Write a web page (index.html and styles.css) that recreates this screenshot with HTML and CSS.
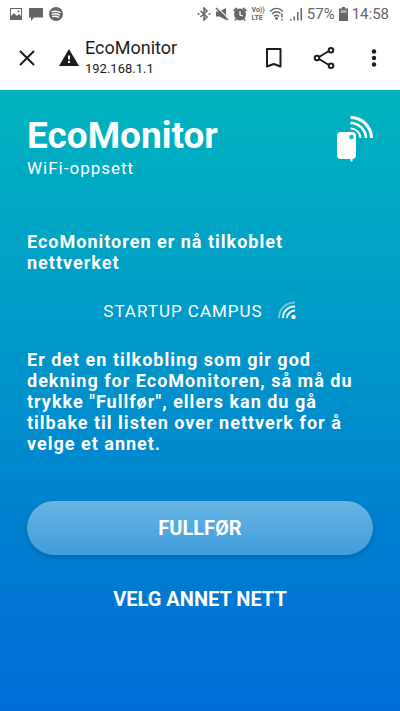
FILE: index.html
```html
<!DOCTYPE html>
<html lang="nb">
<head>
<meta charset="utf-8">
<meta name="viewport" content="width=device-width, initial-scale=1">
<title>EcoMonitor</title>
<link rel="stylesheet" href="styles.css">
</head>
<body>
<div class="status">
  <div class="status-group">
    <svg width="14" height="14" viewBox="0 0 14 14"><path fill="currentColor" fill-rule="evenodd" d="M1 1h12v12H1zM2 2v10h10V2z"/><path fill="currentColor" d="M2 12V9l3-3 3 3 2-2 2 2v3z"/><circle cx="9.500" cy="4.500" r="1" fill="currentColor"/></svg>
    <svg width="14" height="14" viewBox="0 0 14 14"><path fill="currentColor" d="M0 1h14v9.500H5L2 14v-3.500H0z"/></svg>
    <svg width="14" height="14" viewBox="0 0 14 14"><circle cx="7" cy="7" r="7" fill="currentColor"/><path fill="none" stroke="#fff" stroke-linecap="round" stroke-width="1.400" d="M3 4.700c2.800-.8 5.700-.5 8.200.8M3.400 7.200c2.400-.7 4.900-.4 7 .8M3.800 9.500c2-.5 4-.3 5.800.7"/></svg>
  </div>
  <div class="status-group status-right">
    <svg width="14" height="14" viewBox="0 0 14 14"><path fill="none" stroke="currentColor" stroke-width="1.500" d="M3.500 4l6.500 6-3 3V1l3 3-6.500 6"/><circle cx="1.500" cy="7" r="1" fill="currentColor"/><circle cx="12.500" cy="7" r="1" fill="currentColor"/></svg>
    <svg width="14" height="14" viewBox="0 0 14 14"><path fill="currentColor" d="M1 4.500h3.500L11 1v12L4.500 9.500H1z"/><path stroke="#fff" stroke-width="1.200" d="M2 .2l12 12"/><path stroke="currentColor" stroke-width="1.500" d="M1 1l12 12"/></svg>
    <svg width="14" height="14" viewBox="0 0 14 14"><circle cx="7" cy="7.500" r="5.900" fill="currentColor"/><path fill="none" stroke="currentColor" stroke-width="1.700" d="M.7 4L4 1M10 1l3.300 3M3 12l-1 1.500M11 12l1 1.500"/><path fill="none" stroke="#fff" stroke-width="1.200" d="M7 4v4l3 1"/></svg>
    <span class="volte"><span>Vo))</span><span>LTE</span></span>
    <svg width="16" height="14" viewBox="0 0 16 14"><path fill="none" stroke="currentColor" stroke-width="1.400" d="M1 4.500c4-4 9-4 13 0M3 7c3-3 6-3 9 0M5 9.500c1.700-1.700 3.300-1.700 5 0"/><circle cx="7.500" cy="11.500" r="1.400" fill="currentColor"/><path stroke="#fff" stroke-width="3" d="M13 6v8"/><path stroke="currentColor" stroke-width="1.500" d="M13 6.500v4M13 12v1.500"/></svg>
    <svg width="14" height="14" viewBox="0 0 14 14"><path fill="currentColor" d="M1 12h1.500v1.500H1zM4.500 9.500H6v4H4.500zM8 5h1.500v8.500H8zM11.500 1H13v12.500h-1.500z"/></svg>
    <span class="status-text">57%</span>
    <svg width="9" height="14" viewBox="0 0 9 14"><path fill="currentColor" d="M3 0h3v1.500h3V14H0V1.500h3z"/><path fill="#aaa" d="M1.500 3h6v3h-6z"/></svg>
    <span class="status-text">14:58</span>
  </div>
</div>
<header class="bar">
  <button class="icon" aria-label="Lukk"><svg width="20" height="20" viewBox="0 0 20 20"><path stroke="currentColor" stroke-width="2" d="M3 3l14 14M17 3L3 17"/></svg></button>
  <svg class="warn" width="20" height="18" viewBox="0 0 20 18"><path fill="currentColor" d="M10 0l10 17H0z"/><path stroke="#fff" stroke-width="2" d="M10 6.500v4M10 12v2"/></svg>
  <div class="site"><div class="site-name">EcoMonitor</div><div class="site-host">192.168.1.1</div></div>
  <div class="actions">
    <button class="icon" aria-label="Bokmerke"><svg width="24" height="24" viewBox="0 0 24 24"><path fill="none" stroke="currentColor" stroke-width="2" stroke-linejoin="round" d="M5 3h13.500v17.500L11.800 18 5 20.500z"/></svg></button>
    <button class="icon" aria-label="Del"><svg width="24" height="24" viewBox="0 0 24 24"><path fill="none" stroke="currentColor" stroke-width="1.800" d="M7 11l10-6M7 13l10 6"/><g fill="#fff" stroke="currentColor" stroke-width="2"><circle cx="5" cy="12" r="2.300"/><circle cx="19" cy="4.300" r="2.300"/><circle cx="19" cy="19.700" r="2.300"/></g></svg></button>
    <button class="icon" aria-label="Meny"><svg width="24" height="24" viewBox="0 0 24 24"><g fill="currentColor"><circle cx="12" cy="5.500" r="2.200"/><circle cx="12" cy="12" r="2.200"/><circle cx="12" cy="18.500" r="2.200"/></g></svg></button>
  </div>
</header>
<main class="page">
  <div class="head">
    <div><h1>EcoMonitor</h1><p class="sub">WiFi-oppsett</p></div>
    <svg width="37" height="46" viewBox="0 0 37 46"><rect x="1" y="16" width="19" height="27" rx="4" fill="#fff"/><path fill="#fff" d="M14.500 42h2v3.500h-2z"/><circle cx="15.500" cy="21" r="2.300" fill="#19b9d4"/><g fill="none" stroke="#fff" stroke-width="2.600"><path d="M14.500 1.500A21 21 0 0 1 35.500 22" stroke-width="3.200"/><path d="M14.500 7A15.500 15.500 0 0 1 30 22"/><path d="M14.500 12.500A10 10 0 0 1 24.500 22" stroke-width="2"/></g></svg>
  </div>
  <p class="message">EcoMonitoren er nå tilkoblet nettverket</p>
  <div class="network"><span>STARTUP CAMPUS</span>
    <svg width="20" height="20" viewBox="0 0 20 20"><g fill="none" stroke="#fff" stroke-width="2"><path opacity=".45" d="M2 17C2 8 9 1.500 18 1.500"/><path d="M6 17C6 10 11 5.500 18 5.500M10 17c0-4 4-7.500 8-7.500"/></g><circle cx="16.500" cy="16" r="2.200" fill="#fff"/></svg>
  </div>
  <p class="message">Er det en tilkobling som gir god dekning for EcoMonitoren, så må du trykke "Fullfør", ellers kan du gå tilbake til listen over nettverk for å velge et annet.</p>
  <div class="buttons">
    <button class="btn primary">FULLFØR</button>
    <button class="btn">VELG ANNET NETT</button>
  </div>
</main>
</body>
</html>
```
FILE: styles.css
```css
* {
  box-sizing: border-box;
}

body {
  margin: 0;
  min-height: 100vh;
  display: flex;
  flex-direction: column;
  background: #fff;
  color: #fff;
  font-family: Roboto, "Liberation Sans", sans-serif;
}

h1,
p {
  margin: 0;
}

svg {
  display: block;
  flex: none;
}

button {
  border: 0;
  padding: 0;
  background: none;
  color: inherit;
  font-family: inherit;
}

.status {
  display: flex;
  justify-content: space-between;
  height: 27px;
  padding: 0 11px 0 9px;
  color: #666;
}

.status-group {
  display: flex;
  align-items: center;
  gap: 6px;
}

.status-right {
  gap: 4px;
}

.status-text {
  font-size: 15px;
  line-height: 18px;
}

.volte {
  display: flex;
  flex-direction: column;
  font-size: 7px;
  font-weight: 700;
  line-height: 8px;
}

.bar {
  display: flex;
  align-items: center;
  height: 63px;
  padding: 0 14px 2px 17px;
  color: #1c1c1c;
}

.warn {
  margin-left: 22px;
}

.site {
  margin-left: 6px;
}

.site-name {
  font-size: 18px;
  line-height: 22px;
}

.site-host {
  font-size: 13px;
  line-height: 20px;
}

.actions {
  display: flex;
  gap: 26px;
  margin-left: auto;
}

.page {
  flex: 1;
  padding: 26px 27px 24px;
  background: linear-gradient(#00b4be, #009ac9 38%, #0081d0 68%, #006dd7);
  letter-spacing: 1px;
}

.head {
  display: flex;
  justify-content: space-between;
}

h1 {
  font-size: 37px;
  line-height: 40px;
  letter-spacing: 0;
}

.sub {
  font-size: 17px;
  line-height: 24px;
}

.message {
  font-size: 18px;
  font-weight: 700;
  line-height: 21px;
}

.head + .message {
  margin-top: 51px;
}

.network {
  display: flex;
  justify-content: center;
  align-items: center;
  gap: 14px;
  margin: 28px 0;
  font-size: 17px;
  line-height: 20px;
}

.buttons {
  display: grid;
  gap: 17px;
  margin-top: 47px;
}

.btn {
  height: 54px;
  border-radius: 27px;
  font-size: 20px;
  font-weight: 700;
}

.primary {
  background: linear-gradient(#ffffff66, #ffffff40);
  box-shadow: 0 2px 5px #00000033;
}
```
